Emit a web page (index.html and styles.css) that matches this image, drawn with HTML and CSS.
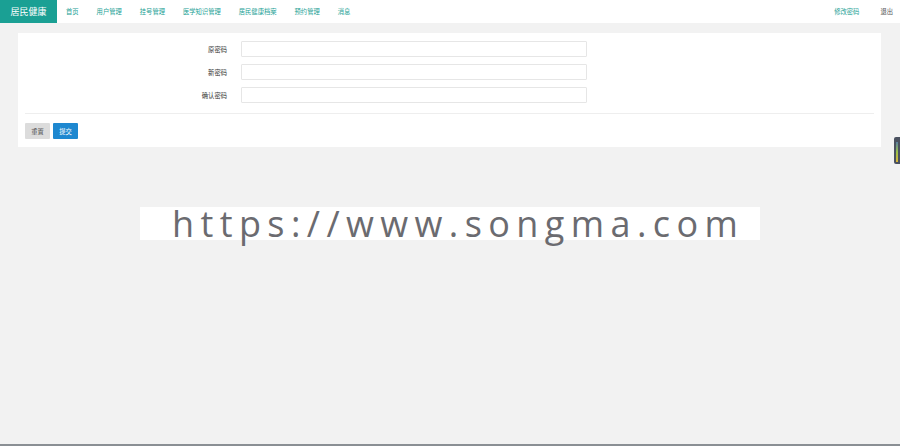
FILE: index.html
```html
<!DOCTYPE html>
<html lang="zh-CN">
<head>
    <meta charset="UTF-8">
    <meta name="viewport" content="width=device-width, initial-scale=1.0">
    <title>居民健康</title>
    <link rel="stylesheet" href="styles.css">
</head>
<body>
    <div class="header">
        <div class="logo">居民健康</div>
        <ul class="nav">
            <li>首页</li>
            <li>用户管理</li>
            <li>挂号管理</li>
            <li>医学知识管理</li>
            <li>居民健康档案</li>
            <li>预约管理</li>
            <li>消息</li>
        </ul>
        <ul class="nav nav-right">
            <li>修改密码</li>
            <li class="logout">退出</li>
        </ul>
    </div>

    <div class="main">
        <div class="card">
            <div class="form-row">
                <label>原密码</label>
                <input type="password">
            </div>
            <div class="form-row">
                <label>新密码</label>
                <input type="password">
            </div>
            <div class="form-row">
                <label>确认密码</label>
                <input type="password">
            </div>
            <div class="divider"></div>
            <div class="actions">
                <button class="btn btn-reset">重置</button>
                <button class="btn btn-submit">提交</button>
            </div>
        </div>

        <div class="watermark">https://www.songma.com</div>
    </div>

    <div class="side-tab"><span></span></div>
    <div class="taskbar"></div>
</body>
</html>
```

FILE: styles.css
```css
* {
    box-sizing: border-box;
}
body {
    margin: 0;
    height: 446px;
    overflow: hidden;
    background-color: #f2f2f2;
    font-family: "Noto Sans CJK SC", "Noto Sans", sans-serif;
    position: relative;
}
.header {
    height: 23px;
    background: #fff;
    display: flex;
    align-items: stretch;
}
.logo {
    width: 57px;
    background-color: #1aa094;
    color: #fff;
    font-size: 9px;
    display: flex;
    align-items: center;
    justify-content: center;
}
.nav {
    list-style: none;
    margin: 0;
    padding: 0;
    display: flex;
    align-items: center;
}
.nav li {
    font-size: 6.3px;
    color: #1aa094;
    padding: 0 9px;
}
.nav-right {
    margin-left: auto;
}
.nav-right li {
    padding: 0 10.5px;
}
.nav-right .logout {
    color: #555;
    padding-right: 7px;
}
.main {
    padding: 10px 19px 0 18px;
}
.card {
    background: #fff;
    padding: 8px 7px 8px 7px;
}
.form-row {
    display: flex;
    align-items: center;
    height: 16px;
    margin-bottom: 7px;
}
.form-row label {
    width: 202px;
    text-align: right;
    font-size: 6.3px;
    color: #333;
}
.form-row input {
    margin-left: 14px;
    width: 346px;
    height: 16px;
    border: 1px solid #e6e6e6;
    border-radius: 1px;
    padding: 0 4px;
    outline: none;
}
.divider {
    height: 1px;
    background: #eee;
    margin: 10px 0 9px;
}
.actions {
    display: flex;
    gap: 3px;
}
.btn {
    width: 25px;
    height: 16px;
    border: none;
    border-radius: 1px;
    font-family: inherit;
    font-size: 6.3px;
    padding: 0;
}
.btn-reset {
    background: #dcdcdc;
    color: #555;
}
.btn-submit {
    background: #1e88d0;
    color: #fff;
}
.watermark {
    width: 620px;
    height: 33px;
    margin: 60px 0 0 122px;
    background: #fff;
    color: #6b6b70;
    font-family: "Open Sans", "DejaVu Sans", sans-serif;
    font-size: 36px;
    line-height: 33px;
    letter-spacing: 6.4px;
    padding-left: 32px;
    white-space: nowrap;
}
.side-tab {
    position: absolute;
    right: 0;
    top: 137px;
    width: 6px;
    height: 27px;
    background: #4b5260;
    border-radius: 2px 0 0 2px;
    padding: 5px 0 2px 2px;
}
.side-tab span {
    display: block;
    width: 2px;
    height: 100%;
    background: linear-gradient(#5a7fa0, #9bc24a, #d9b43a);
}
.taskbar {
    position: absolute;
    left: 0;
    right: 0;
    bottom: 0;
    height: 2px;
    background: #8a8f94;
}
```
